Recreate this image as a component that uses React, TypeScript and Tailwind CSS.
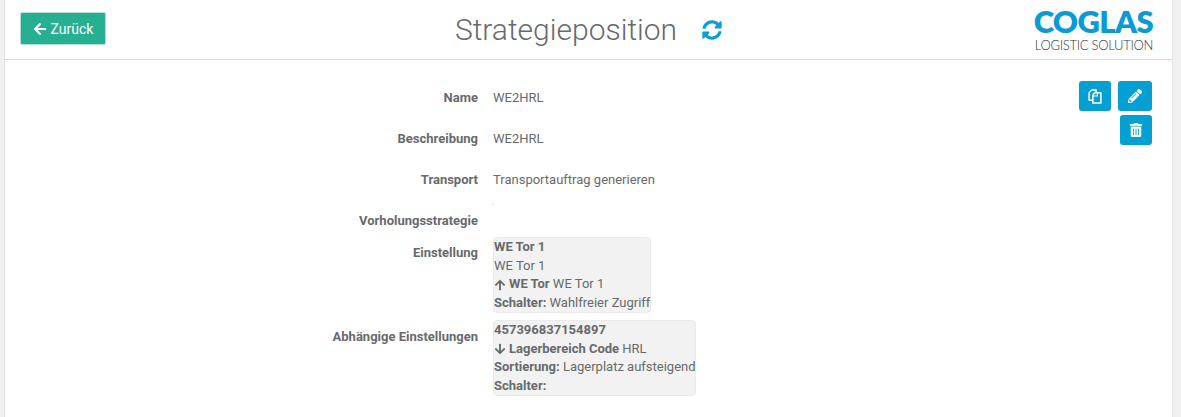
import { FaArrowLeft, FaArrowUp, FaArrowDown, FaPencilAlt, FaSyncAlt, FaTrashAlt } from "react-icons/fa";
import type { ReactNode } from "react";

function CopyIcon() {
    return (
        <svg viewBox="0 0 13 14" className="h-[15px] w-[14px]" fill="none" stroke="currentColor" strokeWidth="1.4" strokeLinejoin="round">
            <path d="M4.5 10.5H1V3.5L3.5 1H7.5V3.5" />
            <path d="M4.5 5.5L6.5 3.5H12V13H4.5Z" />
            <path d="M8.7 3.5V6.5H4.8" strokeWidth="1" />
        </svg>
    );
}

function Row({ label, className, children }: { label: string; className: string; children?: ReactNode }) {
    return (
        <div className={`flex ${className}`}>
            <div className="w-[473px] shrink-0 text-right font-bold">{label}</div>
            <div className="ml-[15px]">{children}</div>
        </div>
    );
}

function InfoBox({ children, className = "" }: { children: ReactNode; className?: string }) {
    return (
        <div className={`rounded-[4px] border border-[#ebebeb] bg-[#f2f2f2] leading-[18.5px] ${className}`}>
            {children}
        </div>
    );
}

export default function App() {
    return (
        <div
            className="flex h-[417px] w-[1181px] overflow-hidden bg-[#f0f0f0] text-[13px] text-[#676a6c]"
            style={{ fontFamily: "Roboto, sans-serif" }}
        >
            <div className="ml-[4px] w-[1169px] border-x border-[#e4e4e4] bg-white">
                <header className="flex h-[60px] items-start border-b border-[#d9d9d9]">
                    <div className="w-[400px] pl-[15px] pt-[12px]">
                        <button
                            className="flex h-[33px] w-[86px] items-center justify-center gap-[4px] rounded-[2px] border border-[#b5dfd3] bg-[#26b091] pt-[1px] text-[14px] text-white"
                            type="button"
                        >
                            <FaArrowLeft className="text-[14px]" />
                            Zurück
                        </button>
                    </div>
                    <div className="flex w-[337px] items-center justify-center pt-[10px]">
                        <h1 className="ml-[30px] text-[30px] font-light leading-[40px] text-[#676a6c]">Strategieposition</h1>
                        <FaSyncAlt className="ml-[25px] shrink-0 text-[20px] text-[#0a9fd8]" />
                    </div>
                    <div className="ml-auto mr-[19px] flex flex-col items-end pt-[5px]">
                        <div
                            className="h-[33px] text-[31px] font-extrabold leading-[33px] tracking-[-0.6px] text-[#0a9ad6]"
                            style={{ fontFamily: "Lato, sans-serif" }}
                        >
                            COGLAS
                        </div>
                        <div
                            className="text-[13px] font-light leading-[15px] tracking-[-0.3px] text-[#333333]"
                            style={{ fontFamily: "Lato, sans-serif" }}
                        >
                            LOGISTIC SOLUTION
                        </div>
                    </div>
                </header>
                <div className="flex">
                    <div className="flex-1 pt-[29px] leading-[18px]">
                        <Row label="Name" className="h-[41px]">WE2HRL</Row>
                        <Row label="Beschreibung" className="h-[41px]">WE2HRL</Row>
                        <Row label="Transport" className="relative h-[41px]">
                            Transportauftrag generieren
                            <span className="absolute left-[488px] top-[33px] h-[1px] w-[1px] bg-[#d5d5d5]" />
                        </Row>
                        <Row label="Vorholungsstrategie" className="h-[17px]" />
                        <Row label="Einstellung" className="mt-[15px] h-[83px]">
                            <div className="-mt-[7px]">
                                <InfoBox className="w-fit">
                                    <div className="font-bold">WE Tor 1</div>
                                    <div>WE Tor 1</div>
                                    <div><FaArrowUp className="mr-[3px] inline text-[12px]" /><b>WE Tor</b> WE Tor 1</div>
                                    <div><b>Schalter:</b> Wahlfreier Zugriff</div>
                                </InfoBox>
                            </div>
                        </Row>
                        <Row label="Abhängige Einstellungen" className="h-[83px] pt-[1px]">
                            <div className="-mt-[8px]">
                                <InfoBox className="w-[203px] whitespace-nowrap">
                                    <div className="font-bold">457396837154897</div>
                                    <div><FaArrowDown className="mr-[3px] inline text-[12px]" /><b>Lagerbereich Code</b> HRL</div>
                                    <div><b>Sortierung:</b> Lagerplatz aufsteigend</div>
                                    <div><b>Schalter:</b></div>
                                </InfoBox>
                            </div>
                        </Row>
                    </div>
                    <div className="mr-[20px] flex w-[80px] flex-col items-end gap-[4px] pt-[21px]">
                        <div className="flex gap-[7px]">
                            <button className="flex h-[30px] w-[32px] items-center justify-center rounded-[3px] bg-[#049fd3] text-white" type="button">
                                <CopyIcon />
                            </button>
                            <button className="flex h-[30px] w-[34px] items-center justify-center rounded-[3px] bg-[#049fd3] text-[14px] text-white" type="button">
                                <FaPencilAlt />
                            </button>
                        </div>
                        <button className="flex h-[30px] w-[32px] items-center justify-center rounded-[3px] bg-[#049fd3] text-[14px] text-white" type="button">
                            <FaTrashAlt />
                        </button>
                    </div>
                </div>
            </div>
        </div>
    );
}
